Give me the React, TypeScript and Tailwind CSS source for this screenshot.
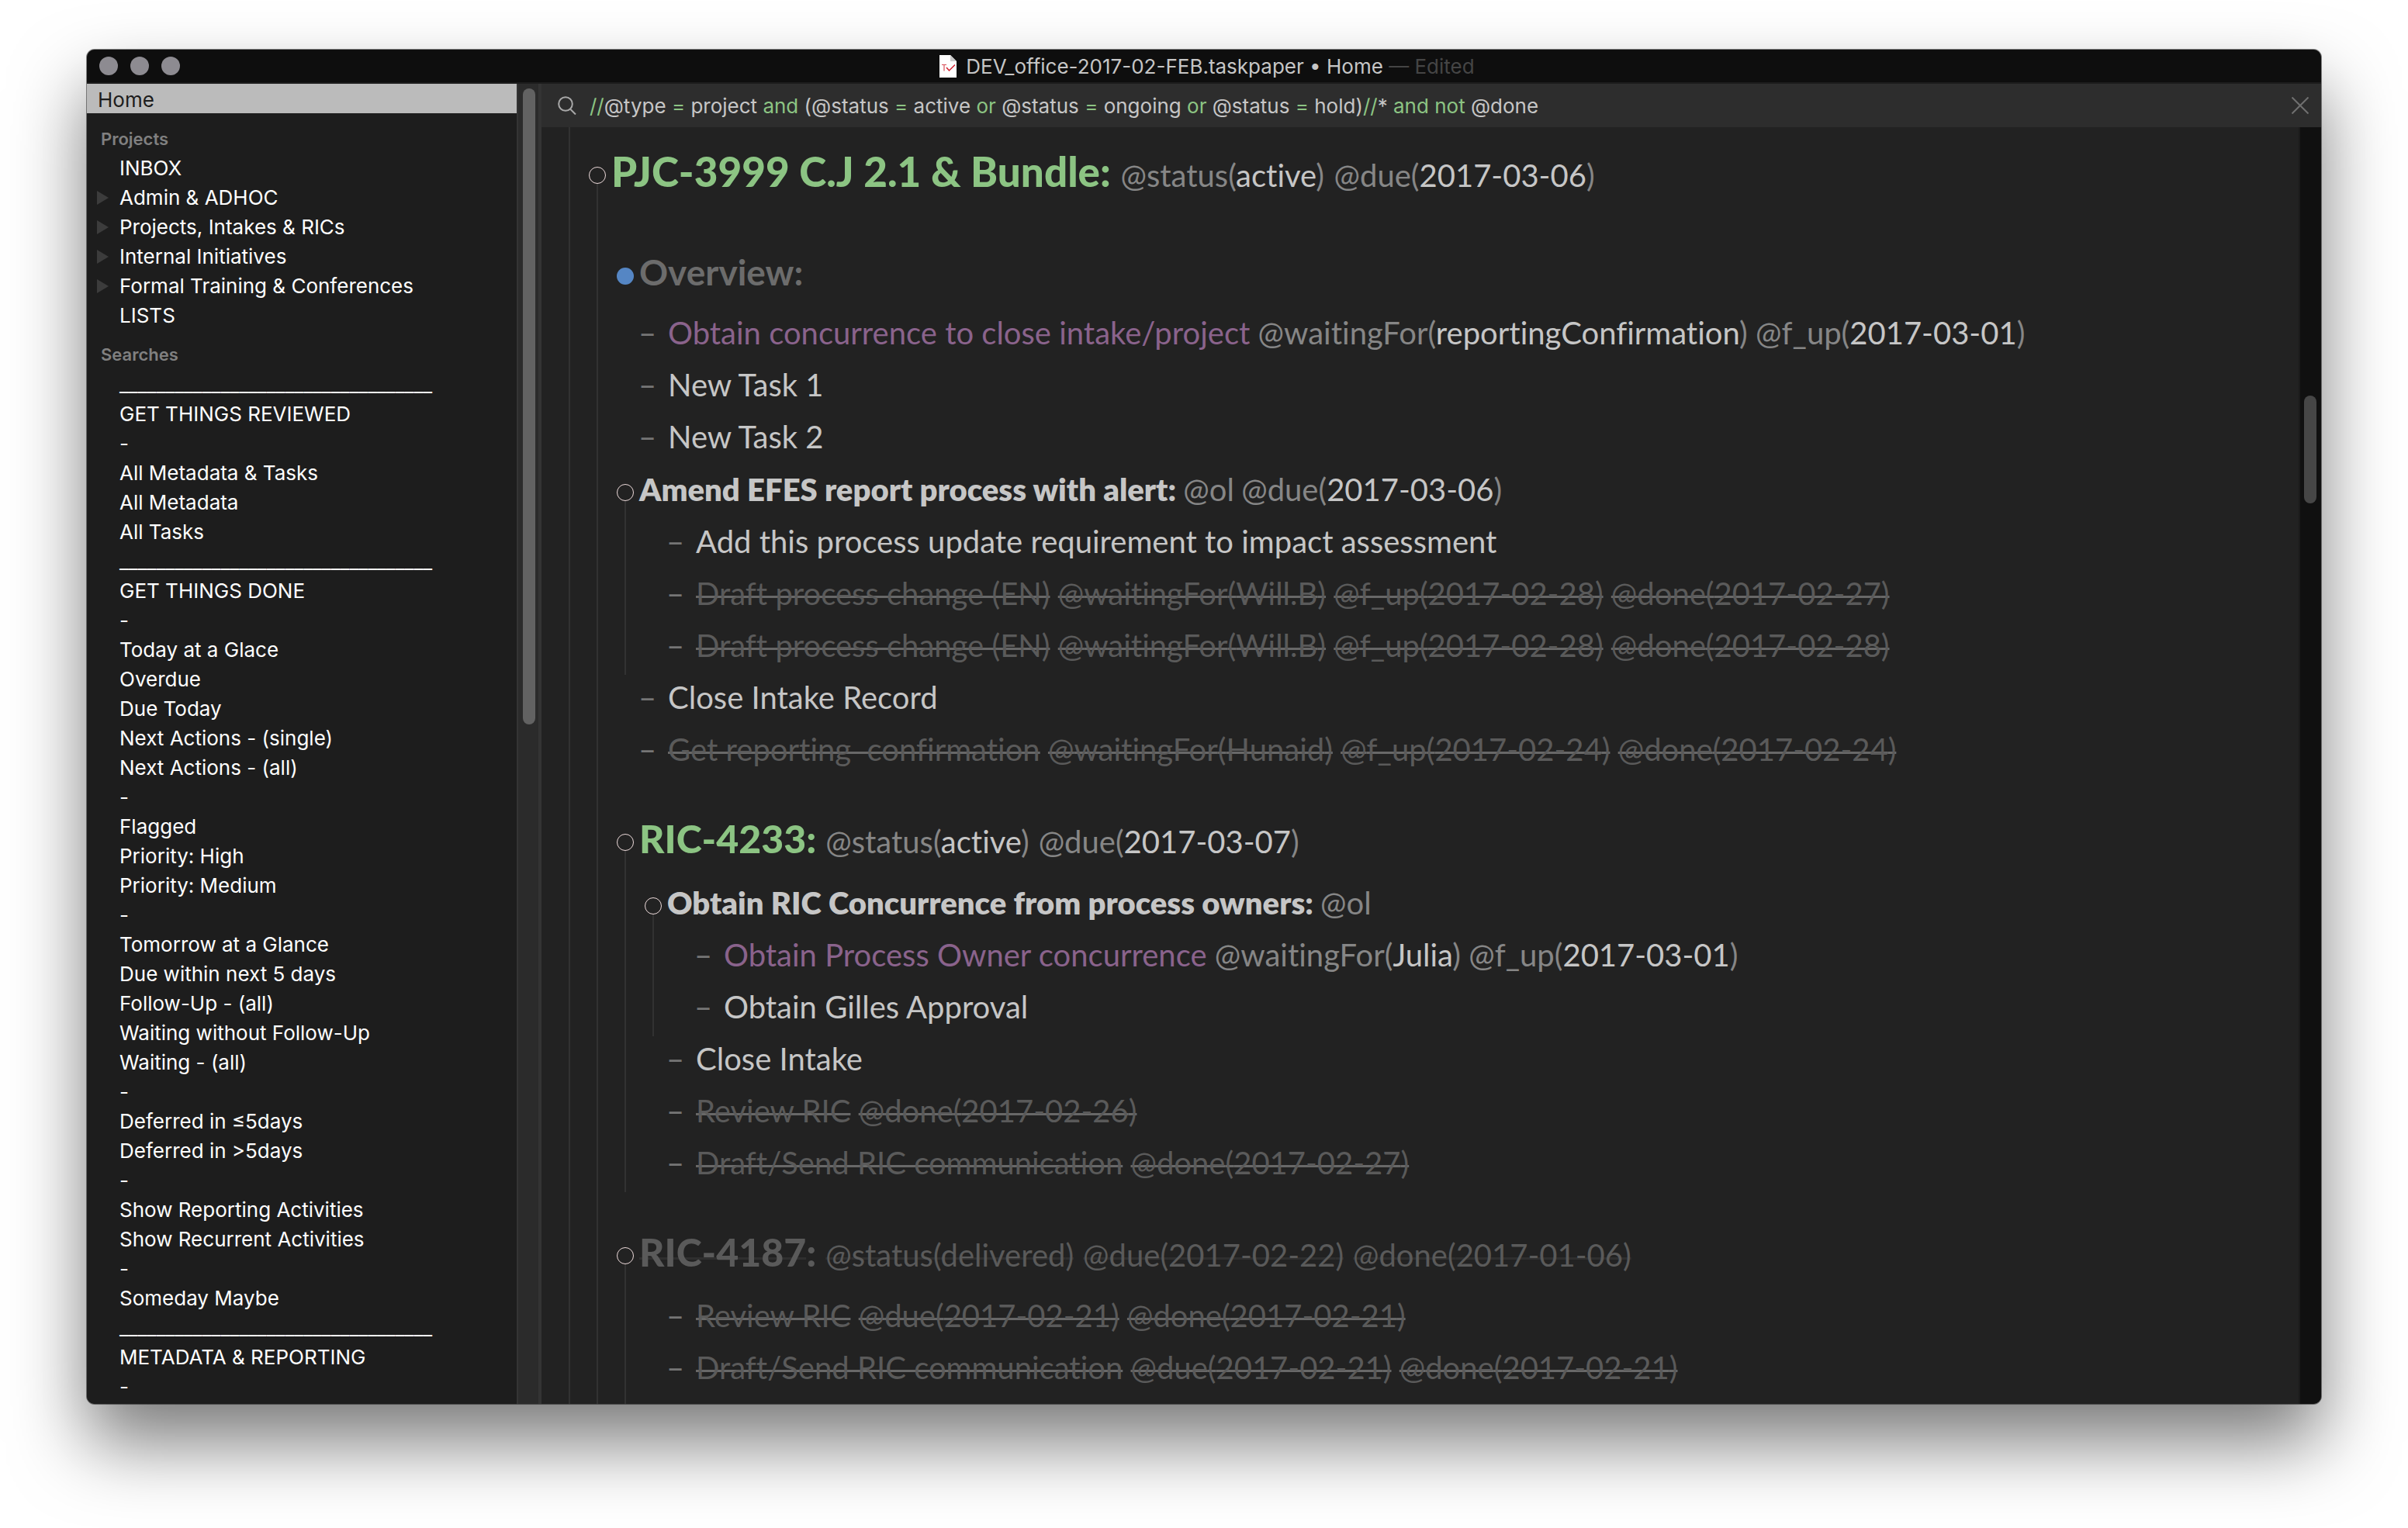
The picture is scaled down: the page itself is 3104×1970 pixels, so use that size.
import React from "react";

type Tag = { name: string; value?: string };
type Kind = "title" | "heading" | "overview" | "project" | "task";
type Item = {
  kind: Kind;
  text: string;
  tags?: Tag[];
  tone?: "waiting" | "done";
  collapsed?: boolean;
  continues?: boolean;
  children?: Item[];
};

const PROJECTS = [
  { label: "INBOX", nested: false },
  { label: "Admin & ADHOC", nested: true },
  { label: "Projects, Intakes & RICs", nested: true },
  { label: "Internal Initiatives", nested: true },
  { label: "Formal Training & Conferences", nested: true },
  { label: "LISTS", nested: false },
];

const RULE = "_".repeat(34);

const SEARCHES = [
  RULE,
  "GET THINGS REVIEWED",
  "-",
  "All Metadata & Tasks",
  "All Metadata",
  "All Tasks",
  RULE,
  "GET THINGS DONE",
  "-",
  "Today at a Glace",
  "Overdue",
  "Due Today",
  "Next Actions - (single)",
  "Next Actions - (all)",
  "-",
  "Flagged",
  "Priority: High",
  "Priority: Medium",
  "-",
  "Tomorrow at a Glance",
  "Due within next 5 days",
  "Follow-Up - (all)",
  "Waiting without Follow-Up",
  "Waiting - (all)",
  "-",
  "Deferred in ≤5days",
  "Deferred in >5days",
  "-",
  "Show Reporting Activities",
  "Show Recurrent Activities",
  "-",
  "Someday Maybe",
  RULE,
  "METADATA & REPORTING",
  "-",
];

const QUERY: [string, boolean][] = [
  ["//", true],
  ["@type ", false],
  ["= ", true],
  ["project ", false],
  ["and ", true],
  ["(@status ", false],
  ["= ", true],
  ["active ", false],
  ["or ", true],
  ["@status ", false],
  ["= ", true],
  ["ongoing ", false],
  ["or ", true],
  ["@status ", false],
  ["= ", true],
  ["hold)", false],
  ["//", true],
  ["* ", false],
  ["and not ", true],
  ["@done", false],
];

const OUTLINE: Item = {
  kind: "title",
  text: "PJC-3999 C.J 2.1 & Bundle:",
  tags: [{ name: "status", value: "active" }, { name: "due", value: "2017-03-06" }],
  continues: true,
  children: [
    { kind: "overview", text: "Overview:", collapsed: true },
    {
      kind: "task",
      tone: "waiting",
      text: "Obtain concurrence to close intake/project",
      tags: [{ name: "waitingFor", value: "reportingConfirmation" }, { name: "f_up", value: "2017-03-01" }],
    },
    { kind: "task", text: "New Task 1" },
    { kind: "task", text: "New Task 2" },
    {
      kind: "project",
      text: "Amend EFES report process with alert:",
      tags: [{ name: "ol" }, { name: "due", value: "2017-03-06" }],
      children: [
        { kind: "task", text: "Add this process update requirement to impact assessment" },
        {
          kind: "task",
          tone: "done",
          text: "Draft process change (EN)",
          tags: [
            { name: "waitingFor", value: "Will.B" },
            { name: "f_up", value: "2017-02-28" },
            { name: "done", value: "2017-02-27" },
          ],
        },
        {
          kind: "task",
          tone: "done",
          text: "Draft process change (EN)",
          tags: [
            { name: "waitingFor", value: "Will.B" },
            { name: "f_up", value: "2017-02-28" },
            { name: "done", value: "2017-02-28" },
          ],
        },
      ],
    },
    { kind: "task", text: "Close Intake Record" },
    {
      kind: "task",
      tone: "done",
      text: "Get reporting  confirmation",
      tags: [
        { name: "waitingFor", value: "Hunaid" },
        { name: "f_up", value: "2017-02-24" },
        { name: "done", value: "2017-02-24" },
      ],
    },
    {
      kind: "heading",
      text: "RIC-4233:",
      tags: [{ name: "status", value: "active" }, { name: "due", value: "2017-03-07" }],
      children: [
        {
          kind: "project",
          text: "Obtain RIC Concurrence from process owners:",
          tags: [{ name: "ol" }],
          children: [
            {
              kind: "task",
              tone: "waiting",
              text: "Obtain Process Owner concurrence",
              tags: [{ name: "waitingFor", value: "Julia" }, { name: "f_up", value: "2017-03-01" }],
            },
            { kind: "task", text: "Obtain Gilles Approval" },
          ],
        },
        { kind: "task", text: "Close Intake" },
        { kind: "task", tone: "done", text: "Review RIC", tags: [{ name: "done", value: "2017-02-26" }] },
        {
          kind: "task",
          tone: "done",
          text: "Draft/Send RIC communication",
          tags: [{ name: "done", value: "2017-02-27" }],
        },
      ],
    },
    {
      kind: "heading",
      tone: "done",
      text: "RIC-4187:",
      tags: [
        { name: "status", value: "delivered" },
        { name: "due", value: "2017-02-22" },
        { name: "done", value: "2017-01-06" },
      ],
      continues: true,
      children: [
        {
          kind: "task",
          tone: "done",
          text: "Review RIC",
          tags: [{ name: "due", value: "2017-02-21" }, { name: "done", value: "2017-02-21" }],
        },
        {
          kind: "task",
          tone: "done",
          text: "Draft/Send RIC communication",
          tags: [{ name: "due", value: "2017-02-21" }, { name: "done", value: "2017-02-21" }],
        },
      ],
    },
  ],
};

// Strikes are drawn as raised underlines so that they sit below the hyphens and behind the glyphs.
const STRUCK =
  "underline decoration-[#686868] decoration-[3px] underline-offset-[-12px] [text-decoration-skip-ink:none]";
const FAINT =
  "underline decoration-[#2f2f2f] decoration-[3px] underline-offset-[-12px] [text-decoration-skip-ink:none]";

function Tags({ item }: { item: Item }) {
  const done = item.tone === "done";
  const mark = done ? (item.kind === "task" ? STRUCK : FAINT) : "";
  return (
    <>
      {(item.tags ?? []).map((tag) => (
        <React.Fragment key={tag.name}>
          {" "}
          <span className={`text-[40px] leading-none font-normal ${done ? "text-[#5a5a5a]" : "text-[#868686]"} ${mark}`}>
            @{tag.name}
            {tag.value !== undefined && (
              <>
                (<span className={done ? "" : "text-[#c6c6c6]"}>{tag.value}</span>)
              </>
            )}
          </span>
        </React.Fragment>
      ))}
    </>
  );
}

const ROW: Record<Exclude<Kind, "task">, { box: string; bullet: string; text: string }> = {
  title: { box: "", bullet: "pt-[34px]", text: "text-[53px] leading-[80px] font-black text-[#8cc483]" },
  overview: { box: "pt-[54px]", bullet: "pt-[30px]", text: "text-[46px] leading-[72px] pb-[9px] font-bold text-[#6c6c6c]" },
  heading: { box: "pt-[41px]", bullet: "pt-[34px]", text: "text-[50px] leading-[80px] pb-[9px] font-black" },
  project: { box: "", bullet: "pt-[27px]", text: "text-[40px] leading-[68px] font-extrabold text-[#c6c6c6]" },
};

function Node({ item }: { item: Item }) {
  const done = item.tone === "done";
  if (item.kind === "task") {
    const tone = done ? `text-[#5a5a5a] ${STRUCK}` : item.tone === "waiting" ? "text-[#8a638c]" : "text-[#c6c6c6]";
    return (
      <li className="flex pl-[28px] text-[40px] leading-[67px] whitespace-pre">
        <span className="w-[38px] shrink-0 text-[#757575]">–</span>
        <p>
          <span className={tone}>{item.text}</span>
          <Tags item={item} />
        </p>
      </li>
    );
  }
  const row = ROW[item.kind];
  const headingTone = item.kind === "heading" ? (done ? "text-[#5a5a5a]" : "text-[#8cc483]") : "";
  return (
    <li className={row.box}>
      <div className="flex">
        <div className={`flex w-[22px] shrink-0 flex-col items-center ${row.bullet}`}>
          <button
            type="button"
            aria-label={`Toggle ${item.text}`}
            className={
              item.collapsed
                ? "size-[22px] shrink-0 rounded-full bg-[#5586c4]"
                : "size-[22px] shrink-0 rounded-full border border-[#ecdada]"
            }
          />
          {item.children && <span className="w-[2px] flex-1 bg-[#323232]" />}
        </div>
        <p className={`ml-[7px] whitespace-pre ${row.text} ${headingTone}`}>
          {done ? (
            <>
              <span className={FAINT}>{item.text.slice(0, -1)}</span>:
            </>
          ) : (
            item.text
          )}
          <Tags item={item} />
        </p>
      </div>
      {item.children && (
        <ul className={`ml-[10px] border-l-2 border-[#323232] pl-6 ${item.continues ? "-mb-6 pb-6" : "-mb-1 pb-1"}`}>
          {item.children.map((child, i) => (
            <Node key={i} item={child} />
          ))}
        </ul>
      )}
    </li>
  );
}

function TitleBar() {
  return (
    <header className="flex h-[44px] items-center border-b-2 border-[#1c1c1c] bg-[#0e0e0e] px-4">
      <div className="flex flex-1 gap-4">
        {["Close", "Minimize", "Zoom"].map((name) => (
          <button key={name} type="button" aria-label={name} className="size-6 rounded-full bg-[#8d8b91]" />
        ))}
      </div>
      <div className="flex items-center gap-3 pl-2">
        <svg viewBox="0 0 22 29" className="h-[29px] w-[22px]" aria-hidden="true">
          <path d="M0 0H14L22 8V29H0Z" fill="#fff" />
          <path d="M14 0L22 8H14Z" fill="#c9c9c9" />
          <path d="M3 12.5H9M6 12.5V20.5" stroke="#d8505a" strokeWidth="1.2" fill="none" />
          <path d="M9 16L12.5 20L20 12.5" stroke="#d3202f" strokeWidth="1.5" fill="none" />
        </svg>
        <h1 className="pt-[2px] text-[26px] leading-8 text-[#c6c6c6]">
          DEV_office-2017-02-FEB.taskpaper • Home <span className="text-[#454545]">— Edited</span>
        </h1>
      </div>
      <div className="flex-1" />
    </header>
  );
}

function Sidebar() {
  return (
    <nav className="w-[554px] shrink-0 bg-[#1d1d1d] text-[26px] leading-[38px] text-white">
      <a href="#home" className="block bg-[#bbbbbb] pt-1 pl-[14px] leading-[34px] text-[#1d1d1d]">
        Home
      </a>
      <h2 className="pt-5 pb-[6px] pl-[18px] text-[22px] leading-[26px] font-semibold text-[#808080]">Projects</h2>
      <ul>
        {PROJECTS.map((p) => (
          <li key={p.label} className="flex items-center gap-[14px] pl-[13px]">
            <svg viewBox="0 0 15 18" className="h-[18px] w-[15px]" aria-hidden="true">
              {p.nested && <path d="M0 0L15 9L0 18Z" fill="#3c3c3c" />}
            </svg>
            <a href="#project">{p.label}</a>
          </li>
        ))}
      </ul>
      <h2 className="pt-[18px] pb-[7px] pl-[18px] text-[22px] leading-[26px] font-semibold text-[#808080]">Searches</h2>
      <ul className="pl-[42px]">
        {SEARCHES.map((s, i) => (
          <li key={i}>
            <a href="#search">{s}</a>
          </li>
        ))}
      </ul>
    </nav>
  );
}

function SearchBar() {
  return (
    <form className="flex h-[56px] items-center bg-[#2d2d2d] pr-4 pl-[21px]">
      <svg viewBox="0 0 24 24" className="size-6" fill="none" stroke="#a8a8a8" strokeWidth="2" aria-hidden="true">
        <circle cx="10" cy="10" r="8.8" />
        <path d="M16 16.5L23 23.5" />
      </svg>
      <div className="relative ml-[17px] flex-1 pt-[2px] text-[26px] leading-8 whitespace-pre text-[#c6c6c6]">
        <div aria-hidden="true">
          {QUERY.map(([text, operator], i) => (
            <span key={i} className={operator ? "text-[#8cc483]" : ""}>
              {text}
            </span>
          ))}
        </div>
        <input
          aria-label="Search"
          defaultValue={QUERY.map(([text]) => text).join("")}
          className="absolute inset-0 w-full bg-transparent text-transparent caret-white outline-none"
        />
      </div>
      <button type="button" aria-label="Clear search">
        <svg viewBox="0 0 22 22" className="size-[22px]" stroke="#707070" strokeWidth="2" aria-hidden="true">
          <path d="M0.500 0.500L21.500 21.500M21.500 0.500L0.500 21.500" />
        </svg>
      </button>
    </form>
  );
}

export default function App() {
  return (
    <div className="flex min-h-screen flex-col bg-white px-[112px] pt-[64px] pb-[160px] font-['Inter',sans-serif]">
      <div className="flex flex-1 flex-col overflow-hidden rounded-[10px] bg-[#222222] shadow-[0_0_0_1px_rgba(0,0,0,0.45),0_50px_95px_rgba(0,0,0,0.52)]">
        <TitleBar />
        <div className="flex flex-1">
          <Sidebar />
          <div className="w-8 shrink-0 border-r-4 border-l-2 border-[#343434] bg-[#2b2b2b] px-[6px] pt-[6px]">
            <div className="h-[820px] w-4 rounded-full bg-[#626262]" />
          </div>
          <main className="flex min-w-0 flex-1 flex-col">
            <SearchBar />
            <div className="flex min-h-0 flex-1">
              <div className="ml-[35px] min-w-0 flex-1 overflow-hidden border-l-2 border-[#323232] pt-[17px] pl-6 font-['Lato',sans-serif] [font-variant-ligatures:none]">
                <ul>
                  <Node item={OUTLINE} />
                </ul>
              </div>
              <div className="w-[29px] shrink-0 border-l-2 border-[#1b1b1b] bg-[#101010] px-[5px] pt-[346px]">
                <div className="h-[139px] w-4 rounded-full bg-[#464646]" />
              </div>
            </div>
          </main>
        </div>
      </div>
    </div>
  );
}
